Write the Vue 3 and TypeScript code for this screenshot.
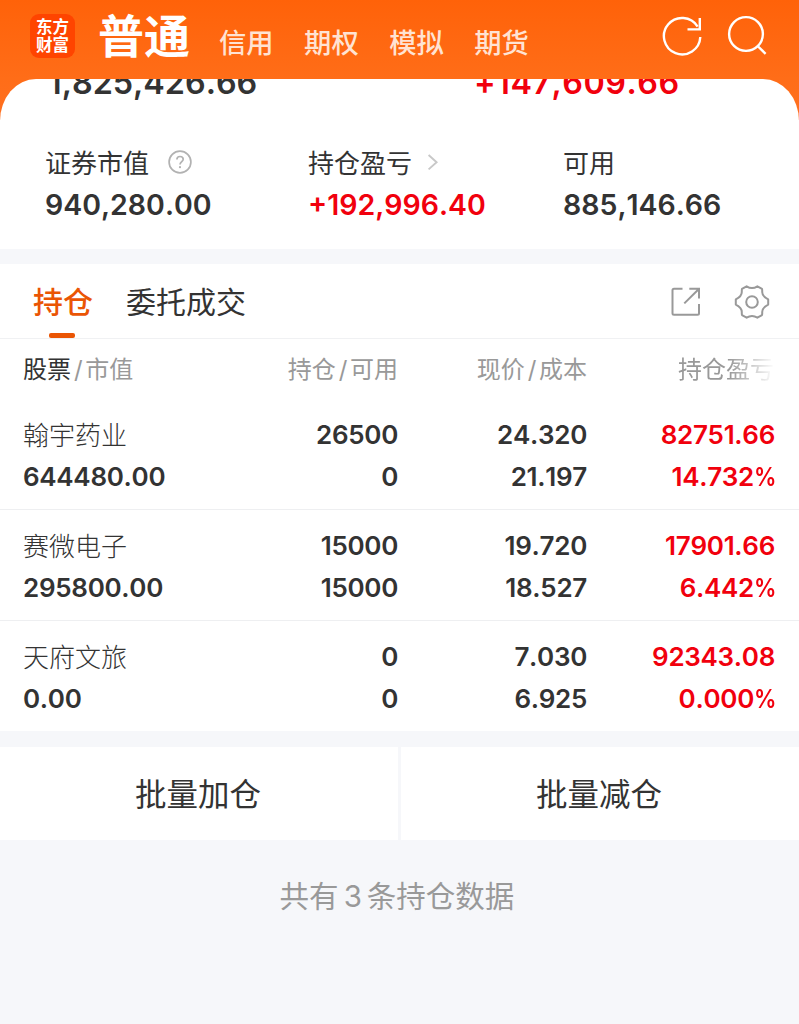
<script setup lang="ts">
interface Holding {
  name: string
  value: string
  held: string
  available: string
  price: string
  cost: string
  profit: string
  rate: string
}

const modes: string[] = ['信用', '期权', '模拟', '期货']

const holdings: Holding[] = [
  { name: '翰宇药业', value: '644480.00', held: '26500', available: '0', price: '24.320', cost: '21.197', profit: '82751.66', rate: '14.732' },
  { name: '赛微电子', value: '295800.00', held: '15000', available: '15000', price: '19.720', cost: '18.527', profit: '17901.66', rate: '6.442' },
  { name: '天府文旅', value: '0.00', held: '0', available: '0', price: '7.030', cost: '6.925', profit: '92343.08', rate: '0.000' },
]
</script>

<template>
  <div class="page">
    <header class="top">
      <div class="logo"><span>东方</span><span>财富</span></div>
      <h1 class="mode-active">普通</h1>
      <nav class="modes">
        <span v-for="m in modes" :key="m">{{ m }}</span>
      </nav>
      <svg class="refresh" width="42" height="42" viewBox="0 0 42 42" fill="none" stroke="#fff" stroke-width="2.4">
        <path d="M39.3 22A18.2 18.2 0 1 1 36.6 11.6" />
        <path d="M38.8 3V14.4H26.5" />
      </svg>
      <svg class="search" width="42" height="42" viewBox="0 0 42 42" fill="none" stroke="#fff" stroke-width="2.4">
        <circle cx="19" cy="19" r="16.9" />
        <path d="M30.6 31L38.6 38.8" />
      </svg>
    </header>

    <section class="summary-wrap">
      <div class="summary">
        <div class="totals">
          <span class="total">1,825,426.66</span>
          <span class="total gain red">+147,609.66</span>
        </div>
        <div class="stats">
          <div class="stat">
            <div class="label">
              证券市值
              <svg class="help" width="24" height="24" viewBox="0 0 24 24" fill="none" stroke="#b2b2b2">
                <circle cx="12" cy="12" r="10.9" stroke-width="1.7" />
                <path d="M8.9 9.6C8.9 7.6 10.2 6.5 12 6.5S15.2 7.6 15.2 9.3C15.2 11.4 12 11.9 12 14.6" stroke-width="1.7" />
                <circle cx="12" cy="17.2" r="1.1" fill="#b2b2b2" stroke="none" />
              </svg>
            </div>
            <div class="num">940,280.00</div>
          </div>
          <div class="stat">
            <div class="label">
              持仓盈亏
              <svg class="chev" width="12" height="18" viewBox="0 0 12 18" fill="none" stroke="#c8c8c8" stroke-width="1.9">
                <path d="M1.6 2L9.6 9.2L1.6 16.4" />
              </svg>
            </div>
            <div class="num red">+192,996.40</div>
          </div>
          <div class="stat">
            <div class="label">可用</div>
            <div class="num">885,146.66</div>
          </div>
        </div>
      </div>
    </section>

    <section class="tabs">
      <span class="tab active">持仓</span>
      <span class="tab">委托成交</span>
      <svg class="share" width="32" height="32" viewBox="0 0 32 32" fill="none" stroke="#999" stroke-width="2">
        <path d="M12.5 2.8H4Q2.5 2.8 2.5 4.3V27.3Q2.5 28.8 4 28.8H27.5Q29 28.8 29 27.3V18" />
        <path d="M19.3 2.8H29V12.6M28.6 3.2L14.3 17.4" />
      </svg>
      <svg class="gear" width="36" height="36" viewBox="0 0 36 36" fill="none" stroke="#999" stroke-width="2" stroke-linejoin="round">
        <path d="M12.6 2.3Q18 5.8 23.4 2.3L28 4.9Q28.3 6 28.2 8Q28.2 12.4 34.2 15.4V20.6Q28.2 23.6 28.2 28Q28.3 30 28 31.1L23.4 33.7Q18 30.2 12.6 33.7L8 31.1Q7.7 30 7.8 28Q7.8 23.6 1.8 20.6V15.4Q7.8 12.4 7.8 8Q7.7 6 8 4.9Z" />
        <circle cx="18" cy="18" r="5.8" />
      </svg>
    </section>

    <section class="table">
      <div class="row head">
        <span><b>股票</b><i>/</i>市值</span>
        <span>持仓<i>/</i>可用</span>
        <span>现价<i>/</i>成本</span>
        <span class="fade">持仓盈亏</span>
      </div>
      <div v-for="h in holdings" :key="h.name" class="row item">
        <div><p class="name">{{ h.name }}</p><p>{{ h.value }}</p></div>
        <div><p>{{ h.held }}</p><p>{{ h.available }}</p></div>
        <div><p>{{ h.price }}</p><p>{{ h.cost }}</p></div>
        <div class="red"><p>{{ h.profit }}</p><p>{{ h.rate }}<span class="pct">%</span></p></div>
      </div>
    </section>

    <section class="actions">
      <button type="button">批量加仓</button>
      <button type="button">批量减仓</button>
    </section>

    <footer class="foot">共有<em>3</em>条持仓数据</footer>
  </div>
</template>

<style>
body {
  background: #f6f7fa;
}
</style>

<style scoped>
.page {
  width: 799px;
  height: 1024px;
  overflow: hidden;
  background: #f6f7fa;
  color: #333;
  font-family: Inter, "Noto Sans CJK SC", sans-serif;
  font-kerning: none;
}
.red {
  color: #f1000d;
}
.top {
  display: flex;
  height: 79px;
  box-sizing: border-box;
  padding-left: 30px;
  background: linear-gradient(#ff6209, #ff6d18);
  color: #fff;
}
.logo {
  display: flex;
  flex-direction: column;
  align-items: center;
  width: 45px;
  height: 44px;
  margin-top: 14px;
  padding-top: 4px;
  box-sizing: border-box;
  border-radius: 9px;
  background: #ff4400;
  font-size: 16.5px;
  font-weight: 700;
  line-height: 18px;
}
.mode-active {
  margin: 0 0 0 23px;
  width: 92px;
  font-size: 46px;
  font-weight: 700;
  line-height: 72px;
  white-space: nowrap;
}
.modes {
  display: flex;
  flex-shrink: 0;
  gap: 30.5px;
  width: 471px;
  padding-left: 29px;
  box-sizing: border-box;
  font-size: 27.3px;
  font-weight: 500;
  line-height: 88px;
  color: #ffe3d3;
}
.refresh {
  flex-shrink: 0;
  margin-top: 15px;
}
.search {
  flex-shrink: 0;
  margin: 15px 0 0 24px;
}
.summary-wrap {
  background: linear-gradient(#ff6d18, #ff7020 41px, #fff 41px);
  height: 170px;
}
.summary {
  height: 170px;
  overflow: hidden;
  border-radius: 36px 36px 0 0 / 42px 42px 0 0;
  background: #fff;
}
.totals {
  display: grid;
  grid-template-columns: 426px 1fr;
  height: 20px;
  margin-top: -15px;
  padding-left: 48px;
}
.total {
  font-size: 32.3px;
  font-weight: 600;
  line-height: 37px;
}
.total.gain {
  letter-spacing: 0.5px;
}
.stats {
  display: grid;
  grid-template-columns: 263px 255px 1fr;
  padding: 56px 0 0 45px;
}
.label {
  display: flex;
  align-items: center;
  height: 42px;
  font-size: 26px;
}
.help {
  margin: 2px 0 0 19px;
}
.chev {
  margin: 2px 0 0 15px;
}
.num {
  height: 42px;
  font-size: 28.5px;
  font-weight: 600;
  line-height: 46px;
}
.tabs {
  display: flex;
  align-items: center;
  height: 75px;
  margin-top: 15px;
  box-sizing: border-box;
  padding-left: 33px;
  border-bottom: 1px solid #f0f1f3;
  background: #fff;
}
.tab {
  position: relative;
  margin: 2px 33px 0 0;
  font-size: 30px;
  line-height: 76px;
  white-space: nowrap;
}
.tab.active {
  color: #ea5504;
  font-weight: 500;
}
.tab.active::after {
  content: "";
  position: absolute;
  left: 16px;
  bottom: 2px;
  width: 26px;
  height: 5px;
  border-radius: 2px;
  background: #ea5504;
}
.share {
  margin: 1px 0 0 auto;
}
.gear {
  margin: 1px 29px 0 32px;
}
.table {
  background: #fff;
}
.row {
  display: grid;
  grid-template-columns: 200px 175px 189px 188px;
  padding-left: 23px;
}
.row > * {
  text-align: right;
}
.row > :first-child {
  text-align: left;
}
.head {
  height: 60px;
  font-size: 24px;
  line-height: 62px;
  color: #999;
}
.head b {
  color: #333;
  font-weight: 400;
}
.head i {
  margin: 0 2.5px 0 3px;
  font-style: normal;
}
.head .fade {
  padding-right: 1px;
  -webkit-mask-image: linear-gradient(90deg, #000 142px, transparent 188px);
  mask-image: linear-gradient(90deg, #000 142px, transparent 188px);
}
.item {
  height: 111px;
  box-sizing: border-box;
  padding-top: 15px;
  border-bottom: 1px solid #eeeff1;
}
.item:last-child {
  border-bottom-color: #f6f7fa;
}
.item p {
  margin: 0;
  height: 42px;
  font-size: 26px;
  font-weight: 600;
  line-height: 42px;
  letter-spacing: -0.3px;
}
.item .name {
  font-weight: 300;
  line-height: 44px;
  letter-spacing: 0;
}
.pct {
  display: inline-block;
  width: 21px;
  text-align: left;
  transform: scaleX(0.86);
  transform-origin: 0 50%;
}
.actions {
  display: grid;
  grid-template-columns: 398px 398px;
  gap: 3px;
  margin-top: 15px;
}
.actions button {
  height: 93px;
  padding: 0 2px 0 0;
  border: 0;
  background: #fff;
  color: #333;
  font: 400 31.5px/95px Inter, "Noto Sans CJK SC", sans-serif;
}
.foot {
  margin-top: 34px;
  padding-right: 5px;
  text-align: center;
  font-size: 29.5px;
  line-height: 44px;
  color: #999;
}
.foot em {
  margin: 0 5px;
  font-style: normal;
}
</style>
